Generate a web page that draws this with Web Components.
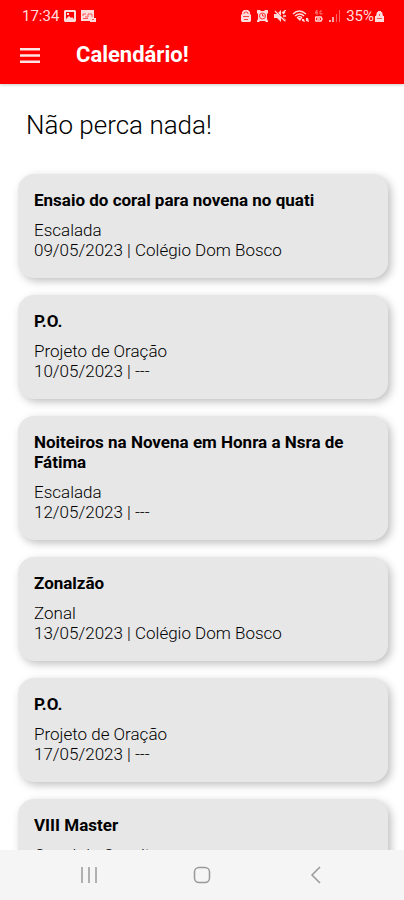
<!DOCTYPE html>
<html lang="pt-BR">
<head>
<meta charset="utf-8">
<meta name="viewport" content="width=device-width, initial-scale=1">
<title>Calendário</title>
<style>
    html, body {
        height: 100%;
        margin: 0;
    }
    body {
        font-family: Roboto, sans-serif;
        background: #fff;
        color: #111;
    }
</style>
</head>
<body>
<calendar-app></calendar-app>

<script>
class StatusBar extends HTMLElement {

    constructor() {
        super();
        this.attachShadow({mode: "open"});
    }

    connectedCallback() {
        this.shadowRoot.innerHTML = `
        <style>
            :host {
                display: flex;
                align-items: center;
                justify-content: space-between;
                height: 32px;
                padding: 0 20px 0 22px;
                color: #ffdcdc;
                font-size: 15px;
            }
            div {
                display: flex;
                align-items: center;
            }
            .left {
                gap: 5px;
            }
            .right {
                gap: 6px;
            }
            .battery {
                display: flex;
                align-items: center;
                gap: 1px;
            }
            svg {
                display: block;
            }
        </style>
        <div class="left">
            <span>17:34</span>
            <svg width="12" height="12" viewBox="0 0 12 12" fill="currentColor">
                <path fill-rule="evenodd" d="M1 0h10l1 1v10l-1 1H1l-1-1V1zM2 2v7l3-3 2 2 1-1 2 2V2zM3 3h2v2H3z"/>
            </svg>
            <svg width="15" height="12" viewBox="0 0 15 12">
                <path fill="currentColor" d="M0 0h13v8h2v4H9v-1H0z"/>
                <path fill="none" stroke="#f55" d="M2 6V4h3M4 7h3V4h4v3M2 8.500h5M11 9.500h2"/>
            </svg>
        </div>
        <div class="right">
            <svg width="10" height="12" viewBox="0 0 10 12">
                <path fill="currentColor" d="M3 0h4l2 2v2l1 1v6l-1 1H1l-1-1V5l1-1V2z"/>
                <path fill="none" stroke="#f44" d="M3 4V3l1-1h2l1 1v1M2 6.500h6M3 9.500h4"/>
            </svg>
            <svg width="11" height="12" viewBox="0 0 11 12">
                <path fill="currentColor" d="M0 0h3l1 1h3l1-1h3v3l-1 1v5l1 2v1H9l-1-1H3l-1 1H0v-1l1-2V4L0 3z"/>
                <circle cx="5.500" cy="6" r="3" fill="none" stroke="#f33"/>
                <path fill="none" stroke="#f33" d="M5.500 4v2h2"/>
            </svg>
            <svg width="12" height="12" viewBox="0 0 12 12">
                <path fill="currentColor" d="M0 4h3l4-4v12L3 8H0z"/>
                <path fill="none" stroke="currentColor" d="M9 4l2-2M9 6h3M9 8l3 3M1 1l10 10M8 3l4-3" stroke-width="1.300"/>
                <path fill="none" stroke="#f33" d="M2 1l10 10" stroke-width=".7"/>
            </svg>
            <svg width="17" height="13" viewBox="0 0 17 13" fill="none" stroke="currentColor">
                <path d="M1 4q6-6 13 0M3 6q5-4 9 0M5 8q3-3 5 0" stroke-width="1.400"/>
                <path fill="currentColor" stroke="none" d="M5 8h5l-2 3zM10 9h2l1 3-3-1zM14 8h2l1 4-3-1z"/>
            </svg>
            <svg width="8" height="14" viewBox="2 0 8 14" fill="none" stroke="currentColor">
                <path opacity=".5" d="M4 1L2 4h3M4 1v5M9 2H7v3h2V4"/>
                <path d="M3 8h5l1 2-1 2H3l-1-2zM4 10h3" stroke-width="1.500"/>
            </svg>
            <svg width="11" height="12" viewBox="0 0 11 12" fill="none" stroke="currentColor">
                <path d="M1 10v2M4 7v5" stroke-width="1.500"/>
                <path opacity=".45" d="M7.500 4v8M10.500 0v12"/>
            </svg>
            <span class="battery">
                <span>35%</span>
                <svg width="9" height="12" viewBox="0 0 9 12">
                    <path fill="currentColor" d="M3 1h3v1h1l1 4h1v6H0V6h1l1-4h1z"/>
                    <path fill="none" stroke="#f55" d="M4.500 4v2M2 8.500h5"/>
                </svg>
            </span>
        </div>`;
    }
}

class AppBar extends HTMLElement {

    constructor() {
        super();
        this.attachShadow({mode: "open"});
    }

    connectedCallback() {
        this.shadowRoot.innerHTML = `
        <style>
            :host {
                display: block;
                flex: none;
                background: #f00;
                color: #fff;
                box-shadow: 0 1px 3px rgba(0, 0, 0, 0.2);
            }
            header {
                display: flex;
                align-items: center;
                gap: 36px;
                padding: 11px 20px 17px;
            }
            button {
                display: block;
                padding: 0;
                border: 0;
                background: none;
                color: #ffe4e4;
            }
            svg {
                display: block;
            }
            h1 {
                margin: 0;
                font-size: 22px;
                font-weight: 700;
                line-height: 24px;
            }
        </style>
        <status-bar></status-bar>
        <header>
            <button type="button" aria-label="Menu">
                <svg width="20" height="15" viewBox="0 0 20 15" fill="currentColor">
                    <path d="M0 0h20v2.500H0zM0 6.200h20v2.500H0zM0 12.400h20v2.500H0z"/>
                </svg>
            </button>
            <h1><slot></slot></h1>
        </header>`;
    }
}

class EventCard extends HTMLElement {

    constructor() {
        super();
        this.attachShadow({mode: "open"});
    }

    connectedCallback() {
        this.shadowRoot.innerHTML = `
        <style>
            :host {
                display: block;
                padding: 16px 16px 18px;
                border-radius: 16px;
                background: #e7e7e7;
                box-shadow: 3px 3px 8px rgba(0, 0, 0, 0.25);
                font-size: 17px;
                line-height: 20px;
            }
            h3 {
                margin: 0 0 10px;
                color: #000;
                font-size: 17px;
                font-weight: 700;
            }
            p {
                margin: 0;
                font-weight: 300;
                color: #000;
            }
        </style>
        <h3><slot name="title"></slot></h3>
        <p><slot name="group"></slot></p>
        <p><slot></slot></p>`;
    }
}

class NavBar extends HTMLElement {

    constructor() {
        super();
        this.attachShadow({mode: "open"});
    }

    connectedCallback() {
        this.shadowRoot.innerHTML = `
        <style>
            :host {
                display: block;
                flex: none;
                background: #f5f5f5;
            }
            nav {
                display: flex;
                justify-content: space-around;
                padding: 0 32px;
            }
            button {
                display: grid;
                place-items: center;
                width: 48px;
                height: 50px;
                padding: 0;
                border: 0;
                background: none;
                color: #999;
            }
        </style>
        <nav>
            <button type="button" aria-label="Recentes">
                <svg width="18" height="18" viewBox="0 0 18 18" fill="none" stroke="currentColor" stroke-width="1.500">
                    <path d="M2 1v16M9 1v16M16 1v16"/>
                </svg>
            </button>
            <button type="button" aria-label="Início">
                <svg width="18" height="18" viewBox="0 0 18 18" fill="none" stroke="currentColor" stroke-width="1.500">
                    <rect x="1.500" y="1.500" width="15" height="15" rx="4.500"/>
                </svg>
            </button>
            <button type="button" aria-label="Voltar">
                <svg width="18" height="18" viewBox="0 0 18 18" fill="none" stroke="currentColor" stroke-width="1.500">
                    <path d="M14 1L6 9l8 8"/>
                </svg>
            </button>
        </nav>`;
    }
}

class CalendarApp extends HTMLElement {

    constructor() {
        super();
        this.attachShadow({mode: "open"});
    }

    connectedCallback() {
        const events = [
            ["Ensaio do coral para novena no quati", "Escalada", "09/05/2023 | Colégio Dom Bosco"],
            ["P.O.", "Projeto de Oração", "10/05/2023 | ---"],
            ["Noiteiros na Novena em Honra a Nsra de Fátima", "Escalada", "12/05/2023 | ---"],
            ["Zonalzão", "Zonal", "13/05/2023 | Colégio Dom Bosco"],
            ["P.O.", "Projeto de Oração", "17/05/2023 | ---"],
            ["VIII Master", "Canal de Convite", ""]
        ];

        this.shadowRoot.innerHTML = `
        <style>
            :host {
                display: flex;
                flex-direction: column;
                height: 100vh;
            }
            app-bar {
                z-index: 1;
            }
            main {
                flex: 1;
                min-height: 0;
                overflow: hidden;
                padding: 24px 16px 0 18px;
            }
            h2 {
                margin: 0 8px 32px;
                font-size: 26px;
                font-weight: 300;
                line-height: 34px;
                color: #000;
            }
            section {
                display: grid;
                gap: 17px;
            }
        </style>
        <app-bar>Calendário!</app-bar>
        <main>
            <h2>Não perca nada!</h2>
            <section>
                ${events.map(([title, group, detail]) => `
                <event-card>
                    <span slot="title">${title}</span>
                    <span slot="group">${group}</span>
                    ${detail}
                </event-card>`).join("")}
            </section>
        </main>
        <nav-bar></nav-bar>`;
    }
}

customElements.define("status-bar", StatusBar);
customElements.define("app-bar", AppBar);
customElements.define("event-card", EventCard);
customElements.define("nav-bar", NavBar);
customElements.define("calendar-app", CalendarApp);
</script>
</body>
</html>
